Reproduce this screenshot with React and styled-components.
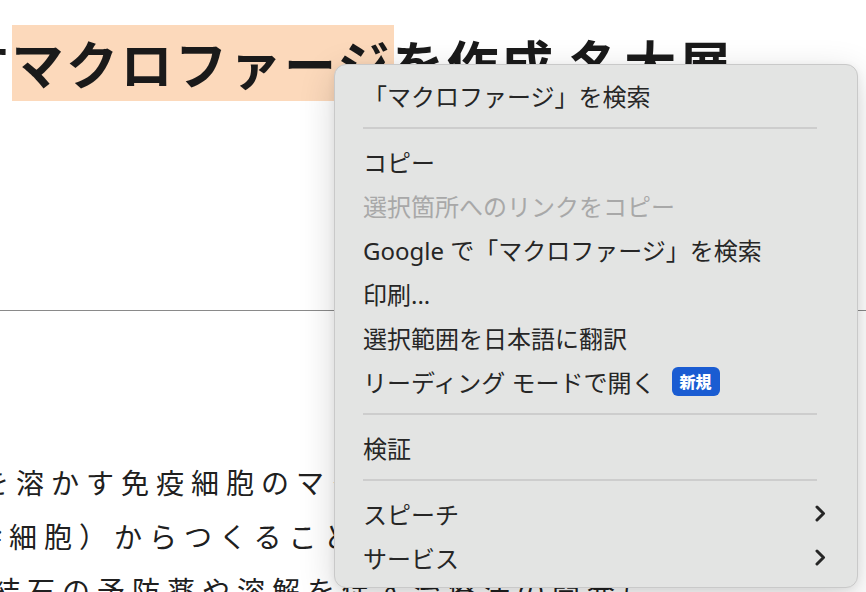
import React from 'react';
import styled, { createGlobalStyle } from 'styled-components';

const GlobalStyle = createGlobalStyle`
  html, body {
    margin: 0;
    padding: 0;
    background: #ffffff;
    overflow: hidden;
  }
  body {
    font-family: "Noto Sans CJK JP", "Noto Sans", sans-serif;
  }
`;

const Page = styled.div`
  position: relative;
  width: 866px;
  height: 592px;
  overflow: hidden;
`;

const Article = styled.article`
  display: flex;
  flex-direction: column;
  color: #1c1c1c;
`;

const Headline = styled.h1`
  margin: 25px 0 0 -43px;
  font-size: 52px;
  font-weight: 700;
  line-height: 76px;
  letter-spacing: 2.5px;
  white-space: nowrap;
  color: #1a1a1a;
`;

const Mark = styled.span`
  display: inline-block;
  height: 76px;
  margin-right: -2px;
  padding-right: 2px;
  background: #fcd9bb;
`;

const Rule = styled.hr`
  margin: 209px 0 0;
  border: none;
  height: 1px;
  background: #8a8a8a;
`;

const Body = styled.div`
  margin-top: 144px;
  display: flex;
  flex-direction: column;
`;

const Line = styled.div`
  margin-left: ${({ $shift }) => $shift}px;
  font-size: 28px;
  line-height: 54px;
  letter-spacing: 7px;
  white-space: nowrap;
  color: #202020;
`;

const Menu = styled.div`
  position: absolute;
  left: 334px;
  top: 64px;
  width: 524px;
  height: 524px;
  box-sizing: border-box;
  padding: 8px 31px 8px 28px;
  background: #e3e4e3;
  border: 1px solid #c9c9c9;
  border-radius: 12px;
  box-shadow: 0 10px 36px rgba(0, 0, 0, 0.16), 0 2px 8px rgba(0, 0, 0, 0.06);
  display: flex;
  flex-direction: column;
  font-family: "Noto Sans", "Noto Sans CJK JP", sans-serif;
`;

const Item = styled.div`
  height: 44px;
  display: flex;
  align-items: center;
  font-size: 24px;
  color: ${({ $disabled }) => ($disabled ? '#a8a8a8' : '#262626')};
  white-space: nowrap;
`;

const Label = styled.span`
  flex: 1;
`;

const Separator = styled.div`
  height: 2px;
  margin: 10px 9px 10px 0;
  background: #cdcdcd;
`;

const Badge = styled.span`
  margin-left: 16px;
  width: 48px;
  height: 29px;
  border-radius: 6px;
  background: #1a5cd2;
  color: #fff;
  font-family: "Noto Sans CJK JP", sans-serif;
  font-size: 16px;
  font-weight: 900;
  display: inline-flex;
  align-items: center;
  justify-content: center;
`;

const Chevron = () => (
  <svg width="11" height="17" viewBox="0 0 11 17">
    <path
      d="M2 2 L8.5 8.5 L2 15"
      fill="none"
      stroke="#262626"
      strokeWidth="3"
      strokeLinecap="round"
      strokeLinejoin="round"
    />
  </svg>
);

const App = () => (
  <Page>
    <GlobalStyle />
    <Article>
      <Headline>
        す<Mark>マクロファージ</Mark>を作成 名大展
      </Headline>
      <Rule />
      <Body>
        <Line $shift={-19}>を溶かす免疫細胞のマクロファージを</Line>
        <Line $shift={-26}>幹細胞）からつくることに成功した。</Line>
        <Line $shift={-8}>結石の予防薬や溶解を促す治療法の開発に</Line>
      </Body>
    </Article>

    <Menu>
      <Item>「マクロファージ」を検索</Item>
      <Separator />
      <Item>コピー</Item>
      <Item $disabled>選択箇所へのリンクをコピー</Item>
      <Item>Google で「マクロファージ」を検索</Item>
      <Item>印刷...</Item>
      <Item>選択範囲を日本語に翻訳</Item>
      <Item>
        リーディング モードで開く<Badge>新規</Badge>
      </Item>
      <Separator />
      <Item>検証</Item>
      <Separator />
      <Item>
        <Label>スピーチ</Label>
        <Chevron />
      </Item>
      <Item>
        <Label>サービス</Label>
        <Chevron />
      </Item>
    </Menu>
  </Page>
);

export default App;
